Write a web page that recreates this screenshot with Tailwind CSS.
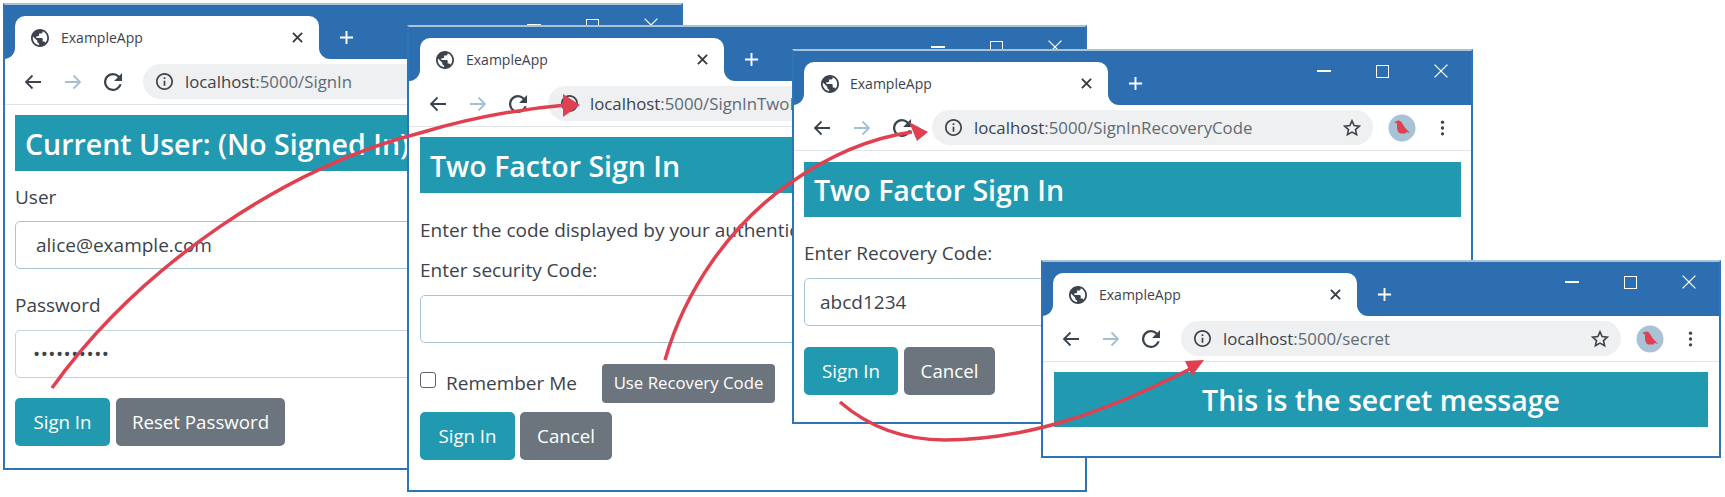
<!DOCTYPE html>
<html lang="en">
<head>
    <meta charset="UTF-8">
    <title>Sign in sequence</title>
    <script src="https://cdn.jsdelivr.net/npm/@tailwindcss/browser@4"></script>
</head>
<body class="bg-white">
    <!-- Shared icons -->
    <svg class="hidden">
        <symbol id="globe" viewBox="2 2 20 20"><path d="M12 2C6.48 2 2 6.48 2 12s4.48 10 10 10 10-4.48 10-10S17.52 2 12 2zm-1 17.93c-3.95-.49-7-3.85-7-7.93 0-.62.08-1.21.21-1.79L9 15v1c0 1.1.9 2 2 2v1.93zm6.9-2.54c-.26-.81-1-1.39-1.9-1.39h-1v-3c0-.55-.45-1-1-1H8v-2h2c.55 0 1-.45 1-1V7h2c1.1 0 2-.9 2-2v-.41c2.93 1.19 5 4.06 5 7.41 0 2.08-.8 3.97-2.1 5.39z" fill="currentColor"/></symbol>
        <symbol id="close" viewBox="0 0 12 12"><path d="M1 1l10 10M11 1L1 11" stroke="currentColor" stroke-width="2" fill="none"/></symbol>
        <symbol id="winclose" viewBox="0 0 12 12"><path d="M.5.5l11 11M11.500.5l-11 11" stroke="currentColor" stroke-width="1.100" fill="none"/></symbol>
        <symbol id="plus" viewBox="0 0 16 16"><path d="M8 1v14M1 8h14" stroke="currentColor" stroke-width="2" fill="none"/></symbol>
        <symbol id="back" viewBox="0 0 18 16"><path d="M17 8H2M8.500 1.500L2 8l6.500 6.500" stroke="currentColor" stroke-width="1.800" fill="none"/></symbol>
        <symbol id="forward" viewBox="0 0 18 16"><path d="M1 8h15M9.500 1.500L16 8l-6.500 6.500" stroke="currentColor" stroke-width="1.800" fill="none"/></symbol>
        <symbol id="reload" viewBox="4 4 16 16"><path d="M17.650 6.350A7.960 7.960 0 0 0 12 4a8 8 0 1 0 7.730 10h-2.080A6 6 0 1 1 12 6c1.660 0 3.140.69 4.220 1.780L13 11h7V4l-2.350 2.350z" fill="currentColor"/></symbol>
        <symbol id="info" viewBox="2 2 20 20"><path d="M11 7h2v2h-2zm0 4h2v6h-2zm1-9C6.480 2 2 6.480 2 12s4.480 10 10 10 10-4.480 10-10S17.520 2 12 2zm0 18c-4.410 0-8-3.590-8-8s3.590-8 8-8 8 3.590 8 8-3.590 8-8 8z" fill="currentColor"/></symbol>
        <symbol id="star" viewBox="0 0 20 20"><path d="M10 2l2.400 5.300 5.800.6-4.300 3.900 1.200 5.700L10 14.600l-5.100 2.900 1.200-5.700L1.800 7.900l5.800-.6z" stroke="currentColor" stroke-width="1.800" fill="none"/></symbol>
        <symbol id="avatar" viewBox="0 0 28 28"><circle cx="14" cy="14" r="13.500" fill="#a9c3d6"/><path d="M6 8l3-1c2-1 4 0 5 2l2.500 4 5.500 6-3.500-1-1 1.500H12c-2-1-3-3.500-3-6.500V9.500z" fill="#e04050"/></symbol>
        <symbol id="dots" viewBox="0 0 6 20"><circle cx="3" cy="3" r="2" fill="currentColor"/><circle cx="3" cy="10" r="2" fill="currentColor"/><circle cx="3" cy="17" r="2" fill="currentColor"/></symbol>
        <symbol id="flare-l" viewBox="0 0 11 11"><path d="M11 0v11H0C6 11 11 6 11 0z" fill="#fff"/></symbol>
        <symbol id="flare-r" viewBox="0 0 11 11"><path d="M0 0v11h11C5 11 0 6 0 0z" fill="#fff"/></symbol>
    </svg>

    <div class="relative w-[1725px] h-[497px] overflow-hidden font-['Open_Sans',sans-serif] text-[#3b434c]">

        <!-- Window 1: sign in -->
        <div class="absolute left-[3px] top-[3px] w-[680px] h-[467px] bg-white border-2 border-[#2f75b5] border-t-[#a9c3d6] overflow-hidden">
            <div class="h-[54px] bg-[#2d6eb0] flex items-end pl-[10px]">
                <div class="relative w-[304px] h-[43px] bg-white rounded-t-[10px] flex items-center pl-[16px] pr-[16px]">
                    <svg class="absolute -left-[11px] bottom-0 w-[11px] h-[11px]"><use href="#flare-l"/></svg>
                    <svg class="absolute -right-[11px] bottom-0 w-[11px] h-[11px]"><use href="#flare-r"/></svg>
                    <svg class="w-[18px] h-[18px]"><use href="#globe"/></svg>
                    <span class="ml-[12px] text-[14px]">ExampleApp</span>
                    <svg class="ml-auto w-[11px] h-[11px] text-[#343a40]"><use href="#close"/></svg>
                </div>
                <svg class="ml-[20px] mb-[14px] w-[15px] h-[15px] text-white"><use href="#plus"/></svg>
                <div class="ml-auto mr-[23px] self-start mt-[13px] flex items-center gap-[45px] text-white">
                    <div class="w-[14px] h-[2px] bg-white"></div>
                    <div class="w-[13px] h-[13px] border-[1.5px] border-white"></div>
                    <svg class="w-[14px] h-[14px]"><use href="#winclose"/></svg>
                </div>
            </div>
            <div class="h-[46px] flex items-center border-b border-[#dfe4e8] pl-[19px] pr-[26px]">
                <svg class="w-[18px] h-[16px]"><use href="#back"/></svg>
                <svg class="ml-[22px] w-[18px] h-[16px] text-[#a3bfd2]"><use href="#forward"/></svg>
                <svg class="ml-[22px] w-[18px] h-[18px]"><use href="#reload"/></svg>
                <div class="ml-[21px] flex-1 h-[35px] rounded-full bg-[#eef0f2] flex items-center pl-[13px] pr-[12px]">
                    <svg class="w-[17px] h-[17px]"><use href="#info"/></svg>
                    <span class="ml-[12px] text-[16.800px]">localhost<span class="text-[#626a72]">:5000/SignIn</span></span>
                    <svg class="ml-auto w-[18px] h-[18px]"><use href="#star"/></svg>
                </div>
                <svg class="ml-[15px] w-[28px] h-[28px]"><use href="#avatar"/></svg>
                <svg class="ml-[24px] w-[5px] h-[18px]"><use href="#dots"/></svg>
            </div>
            <div class="px-[10px]">
                <h4 class="mt-[10px] h-[56px] pt-[2px] bg-[#2199b1] text-white text-[28.500px] font-semibold flex items-center pl-[10px] whitespace-nowrap">Current User: (No Signed In)</h4>
                <div class="mt-[13px] h-[26px] text-[19px] leading-[26px]">User</div>
                <div class="mt-[11px] h-[48px] rounded-[5px] border border-[#a9c3d6] flex items-center pl-[20px] text-[19px]">alice@example.com</div>
                <div class="mt-[23px] h-[26px] text-[19px] leading-[26px]">Password</div>
                <div class="mt-[12px] h-[48px] rounded-[5px] border border-[#c4d3de] flex items-center pl-[17px] text-[19px] tracking-[0.5px]">••••••••••</div>
                <div class="mt-[20px] flex gap-[6px]">
                    <div class="w-[95px] h-[48px] rounded-[5px] bg-[#2199b1] text-white text-[18.700px] flex items-center justify-center">Sign In</div>
                    <div class="w-[169px] h-[48px] rounded-[5px] bg-[#6c757d] text-white text-[18.700px] flex items-center justify-center">Reset Password</div>
                </div>
            </div>
        </div>

        <!-- Window 2: two factor sign in -->
        <div class="absolute left-[407px] top-[25px] w-[680px] h-[467px] bg-white border-2 border-[#2f75b5] border-t-[#a9c3d6] overflow-hidden">
            <div class="h-[54px] bg-[#2d6eb0] flex items-end pl-[11px]">
                <div class="relative w-[304px] h-[43px] bg-white rounded-t-[10px] flex items-center pl-[16px] pr-[16px]">
                    <svg class="absolute -left-[11px] bottom-0 w-[11px] h-[11px]"><use href="#flare-l"/></svg>
                    <svg class="absolute -right-[11px] bottom-0 w-[11px] h-[11px]"><use href="#flare-r"/></svg>
                    <svg class="w-[18px] h-[18px]"><use href="#globe"/></svg>
                    <span class="ml-[12px] text-[14px]">ExampleApp</span>
                    <svg class="ml-auto w-[11px] h-[11px] text-[#343a40]"><use href="#close"/></svg>
                </div>
                <svg class="ml-[20px] mb-[14px] w-[15px] h-[15px] text-white"><use href="#plus"/></svg>
                <div class="ml-auto mr-[23px] self-start mt-[13px] flex items-center gap-[45px] text-white">
                    <div class="w-[14px] h-[2px] bg-white"></div>
                    <div class="w-[13px] h-[13px] border-[1.5px] border-white"></div>
                    <svg class="w-[14px] h-[14px]"><use href="#winclose"/></svg>
                </div>
            </div>
            <div class="h-[46px] flex items-center border-b border-[#dfe4e8] pl-[20px] pr-[26px]">
                <svg class="w-[18px] h-[16px]"><use href="#back"/></svg>
                <svg class="ml-[22px] w-[18px] h-[16px] text-[#a3bfd2]"><use href="#forward"/></svg>
                <svg class="ml-[22px] w-[18px] h-[18px]"><use href="#reload"/></svg>
                <div class="ml-[21px] flex-1 h-[35px] rounded-full bg-[#eef0f2] flex items-center pl-[13px] pr-[12px]">
                    <svg class="w-[17px] h-[17px]"><use href="#info"/></svg>
                    <span class="ml-[12px] text-[16.800px]">localhost<span class="text-[#626a72]">:5000/SignInTwoFactor</span></span>
                    <svg class="ml-auto w-[18px] h-[18px]"><use href="#star"/></svg>
                </div>
                <svg class="ml-[15px] w-[28px] h-[28px]"><use href="#avatar"/></svg>
                <svg class="ml-[24px] w-[5px] h-[18px]"><use href="#dots"/></svg>
            </div>
            <div class="px-[11px]">
                <h4 class="mt-[10px] h-[56px] pt-[2px] bg-[#2199b1] text-white text-[28.500px] font-semibold flex items-center pl-[10px] whitespace-nowrap">Two Factor Sign In</h4>
                <div class="mt-[24px] h-[26px] text-[19px] leading-[26px] whitespace-nowrap">Enter the code displayed by your authenticator app</div>
                <div class="mt-[14px] h-[26px] text-[19px] leading-[26px]">Enter security Code:</div>
                <div class="mt-[12px] h-[48px] rounded-[5px] border border-[#a9c3d6]"></div>
                <div class="mt-[20px] h-[40px] flex items-center">
                    <div class="w-[16px] h-[16px] -mt-[6px] rounded-[3px] border-[1.5px] border-[#5a6168]"></div>
                    <span class="ml-[10px] text-[19px]">Remember Me</span>
                    <div class="ml-[25px] w-[173px] h-[39px] rounded-[4px] bg-[#6c757d] text-white text-[16.800px] flex items-center justify-center">Use Recovery Code</div>
                </div>
                <div class="mt-[9px] flex gap-[5px]">
                    <div class="w-[95px] h-[48px] rounded-[5px] bg-[#2199b1] text-white text-[18.700px] flex items-center justify-center">Sign In</div>
                    <div class="w-[92px] h-[48px] rounded-[5px] bg-[#6c757d] text-white text-[18.700px] flex items-center justify-center">Cancel</div>
                </div>
            </div>
        </div>

        <!-- Window 3: recovery code -->
        <div class="absolute left-[792px] top-[49px] w-[681px] h-[375px] bg-white border-2 border-[#2f75b5] border-t-[#a9c3d6] overflow-hidden">
            <div class="h-[54px] bg-[#2d6eb0] flex items-end pl-[10px]">
                <div class="relative w-[304px] h-[43px] bg-white rounded-t-[10px] flex items-center pl-[17px] pr-[16px]">
                    <svg class="absolute -left-[11px] bottom-0 w-[11px] h-[11px]"><use href="#flare-l"/></svg>
                    <svg class="absolute -right-[11px] bottom-0 w-[11px] h-[11px]"><use href="#flare-r"/></svg>
                    <svg class="w-[18px] h-[18px]"><use href="#globe"/></svg>
                    <span class="ml-[11px] text-[14px]">ExampleApp</span>
                    <svg class="ml-auto w-[11px] h-[11px] text-[#343a40]"><use href="#close"/></svg>
                </div>
                <svg class="ml-[20px] mb-[14px] w-[15px] h-[15px] text-white"><use href="#plus"/></svg>
                <div class="ml-auto mr-[23px] self-start mt-[13px] flex items-center gap-[45px] text-white">
                    <div class="w-[14px] h-[2px] bg-white"></div>
                    <div class="w-[13px] h-[13px] border-[1.5px] border-white"></div>
                    <svg class="w-[14px] h-[14px]"><use href="#winclose"/></svg>
                </div>
            </div>
            <div class="h-[46px] flex items-center border-b border-[#dfe4e8] pl-[19px] pr-[26px]">
                <svg class="w-[18px] h-[16px]"><use href="#back"/></svg>
                <svg class="ml-[22px] w-[18px] h-[16px] text-[#a3bfd2]"><use href="#forward"/></svg>
                <svg class="ml-[22px] w-[18px] h-[18px]"><use href="#reload"/></svg>
                <div class="ml-[21px] flex-1 h-[35px] rounded-full bg-[#eef0f2] flex items-center pl-[13px] pr-[12px]">
                    <svg class="w-[17px] h-[17px]"><use href="#info"/></svg>
                    <span class="ml-[12px] text-[16.800px]">localhost<span class="text-[#626a72]">:5000/SignInRecoveryCode</span></span>
                    <svg class="ml-auto w-[18px] h-[18px]"><use href="#star"/></svg>
                </div>
                <svg class="ml-[15px] w-[28px] h-[28px]"><use href="#avatar"/></svg>
                <svg class="ml-[24px] w-[5px] h-[18px]"><use href="#dots"/></svg>
            </div>
            <div class="px-[10px]">
                <h4 class="mt-[11px] h-[55px] pt-[2px] bg-[#2199b1] text-white text-[28.500px] font-semibold flex items-center pl-[10px] whitespace-nowrap">Two Factor Sign In</h4>
                <div class="mt-[23px] h-[26px] text-[19px] leading-[26px]">Enter Recovery Code:</div>
                <div class="mt-[12px] h-[48px] rounded-[5px] border border-[#a9c3d6] flex items-center pl-[15px] text-[19px]">abcd1234</div>
                <div class="mt-[21px] flex gap-[6px]">
                    <div class="w-[94px] h-[48px] rounded-[5px] bg-[#2199b1] text-white text-[18.700px] flex items-center justify-center">Sign In</div>
                    <div class="w-[91px] h-[48px] rounded-[5px] bg-[#6c757d] text-white text-[18.700px] flex items-center justify-center">Cancel</div>
                </div>
            </div>
        </div>

        <!-- Window 4: secret -->
        <div class="absolute left-[1041px] top-[260px] w-[680px] h-[198px] bg-white border-2 border-[#2f75b5] border-t-[#a9c3d6] overflow-hidden">
            <div class="h-[54px] bg-[#2d6eb0] flex items-end pl-[10px]">
                <div class="relative w-[304px] h-[43px] bg-white rounded-t-[10px] flex items-center pl-[16px] pr-[16px]">
                    <svg class="absolute -left-[11px] bottom-0 w-[11px] h-[11px]"><use href="#flare-l"/></svg>
                    <svg class="absolute -right-[11px] bottom-0 w-[11px] h-[11px]"><use href="#flare-r"/></svg>
                    <svg class="w-[18px] h-[18px]"><use href="#globe"/></svg>
                    <span class="ml-[12px] text-[14px]">ExampleApp</span>
                    <svg class="ml-auto w-[11px] h-[11px] text-[#343a40]"><use href="#close"/></svg>
                </div>
                <svg class="ml-[20px] mb-[14px] w-[15px] h-[15px] text-white"><use href="#plus"/></svg>
                <div class="ml-auto mr-[23px] self-start mt-[13px] flex items-center gap-[45px] text-white">
                    <div class="w-[14px] h-[2px] bg-white"></div>
                    <div class="w-[13px] h-[13px] border-[1.5px] border-white"></div>
                    <svg class="w-[14px] h-[14px]"><use href="#winclose"/></svg>
                </div>
            </div>
            <div class="h-[46px] flex items-center border-b border-[#dfe4e8] pl-[19px] pr-[26px]">
                <svg class="w-[18px] h-[16px]"><use href="#back"/></svg>
                <svg class="ml-[22px] w-[18px] h-[16px] text-[#a3bfd2]"><use href="#forward"/></svg>
                <svg class="ml-[22px] w-[18px] h-[18px]"><use href="#reload"/></svg>
                <div class="ml-[21px] flex-1 h-[35px] rounded-full bg-[#eef0f2] flex items-center pl-[13px] pr-[12px]">
                    <svg class="w-[17px] h-[17px]"><use href="#info"/></svg>
                    <span class="ml-[12px] text-[16.800px]">localhost<span class="text-[#626a72]">:5000/secret</span></span>
                    <svg class="ml-auto w-[18px] h-[18px]"><use href="#star"/></svg>
                </div>
                <svg class="ml-[15px] w-[28px] h-[28px]"><use href="#avatar"/></svg>
                <svg class="ml-[24px] w-[5px] h-[18px]"><use href="#dots"/></svg>
            </div>
            <div class="px-[11px]">
                <h4 class="mt-[10px] h-[55px] pt-[2px] bg-[#2199b1] text-white text-[28.500px] font-semibold flex items-center justify-center whitespace-nowrap">This is the secret message</h4>
            </div>
        </div>

        <!-- Red arrows over the windows -->
        <svg class="absolute inset-0 w-[1725px] h-[497px]" viewBox="0 0 1725 497" fill="none" stroke="#e04050" stroke-width="3.500">
            <path d="M52 388C140 265 290 165 420 133C470 118 520 109 566 105"/>
            <polygon points="580,105 563,94 563,117" fill="#e04050" stroke="none"/>
            <path d="M665 360C685 290 730 225 790 183C830 155 870 138 912 132"/>
            <polygon points="928,132 909,122 917,141" fill="#e04050" stroke="none"/>
            <path d="M840 402C870 428 905 440 945 440C1030 440 1110 410 1192 368"/>
            <polygon points="1204,360 1185,361 1192,376" fill="#e04050" stroke="none"/>
        </svg>
    </div>
</body>
</html>
